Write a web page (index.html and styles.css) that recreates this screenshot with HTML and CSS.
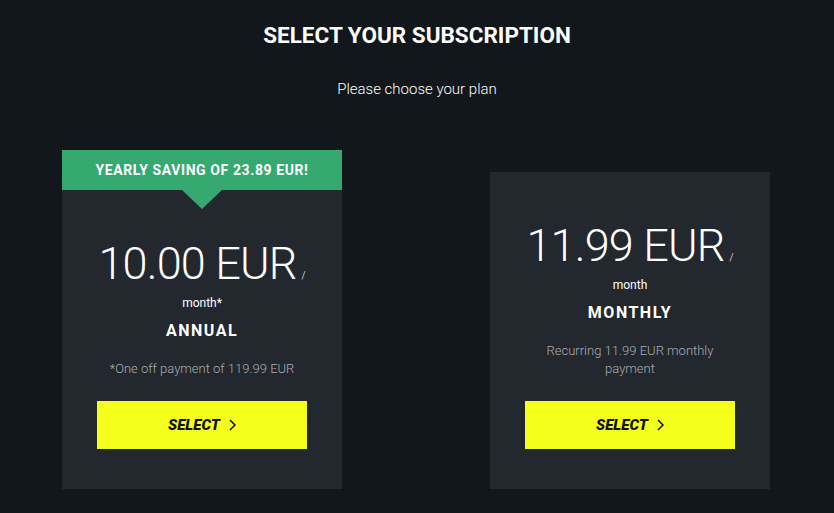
FILE: index.html
```html
<!DOCTYPE html>
<html lang="en">
<head>
    <meta charset="UTF-8">
    <meta name="viewport" content="width=device-width, initial-scale=1.0">
    <title>Select your subscription</title>
    <link rel="stylesheet" href="styles.css">
</head>
<body>

    <div class="page">
        <h1>SELECT YOUR SUBSCRIPTION</h1>
        <p class="subtitle">Please choose your plan</p>

        <div class="plans">
            <div class="plan">
                <div class="plan-banner">YEARLY SAVING OF 23.89 EUR!</div>
                <div class="plan-body">
                    <div class="price">10.00 EUR<span class="slash">/</span></div>
                    <div class="per">month*</div>
                    <div class="plan-name">ANNUAL</div>
                    <p class="note">*One off payment of 119.99 EUR</p>
                    <button class="select-btn">SELECT
                        <svg width="7" height="12" viewBox="0 0 7 12"><polyline points="1,1 6,6 1,11" fill="none" stroke="#111" stroke-width="1.5"/></svg>
                    </button>
                </div>
            </div>

            <div class="plan">
                <div class="plan-body">
                    <div class="price">11.99 EUR<span class="slash">/</span></div>
                    <div class="per">month</div>
                    <div class="plan-name">MONTHLY</div>
                    <p class="note">Recurring 11.99 EUR monthly payment</p>
                    <button class="select-btn">SELECT
                        <svg width="7" height="12" viewBox="0 0 7 12"><polyline points="1,1 6,6 1,11" fill="none" stroke="#111" stroke-width="1.5"/></svg>
                    </button>
                </div>
            </div>
        </div>
    </div>

</body>
</html>
```

FILE: styles.css
```css
* {
    margin: 0;
    padding: 0;
    box-sizing: border-box;
}

body {
    font-family: Roboto, "Liberation Sans", sans-serif;
    background: #11171a;
    color: white;
    height: 100vh;
    overflow: hidden;
}

.page {
    text-align: center;
    padding-top: 22px;
}

h1 {
    font-size: 22.5px;
    line-height: 26px;
    font-weight: 700;
}

.subtitle {
    margin-top: 32px;
    font-size: 15px;
    line-height: 18px;
    font-weight: 300;
}

.plans {
    display: flex;
    justify-content: center;
    align-items: flex-end;
    gap: 148px;
    margin-top: 52px;
    padding-right: 2px;
}

.plan {
    width: 280px;
    background: #22282e;
}

.plan-banner {
    position: relative;
    height: 40px;
    line-height: 40px;
    background: #35a96f;
    font-size: 14px;
    font-weight: 700;
    letter-spacing: 0.6px;
}

/* little arrow under the saving banner */
.plan-banner::after {
    content: "";
    position: absolute;
    left: 50%;
    bottom: -19px;
    transform: translateX(-50%);
    border-left: 20px solid transparent;
    border-right: 20px solid transparent;
    border-top: 19px solid #35a96f;
}

.plan-body {
    display: flex;
    flex-direction: column;
    align-items: center;
    padding: 49px 35px 40px;
}

.price {
    font-size: 45px;
    line-height: 50px;
    font-weight: 300;
    letter-spacing: -0.8px;
    white-space: nowrap;
}

.slash {
    font-size: 10px;
    line-height: 0;
    margin-left: 5px;
    letter-spacing: 0;
}

.per {
    margin-top: 6px;
    font-size: 12px;
    line-height: 16px;
}

.plan-name {
    margin-top: 10px;
    font-size: 16px;
    line-height: 20px;
    font-weight: 700;
    letter-spacing: 1.5px;
}

.note {
    margin-top: 19px;
    font-size: 13px;
    line-height: 18px;
    font-weight: 300;
    color: #a9adb1;
}

.select-btn {
    margin-top: 23px;
    width: 210px;
    height: 48px;
    display: flex;
    justify-content: center;
    align-items: center;
    gap: 9px;
    background: #f5ff1c;
    border: none;
    font-family: Roboto, sans-serif;
    font-size: 15px;
    font-weight: 900;
    font-style: italic;
    color: #111;
    cursor: pointer;
}
```
